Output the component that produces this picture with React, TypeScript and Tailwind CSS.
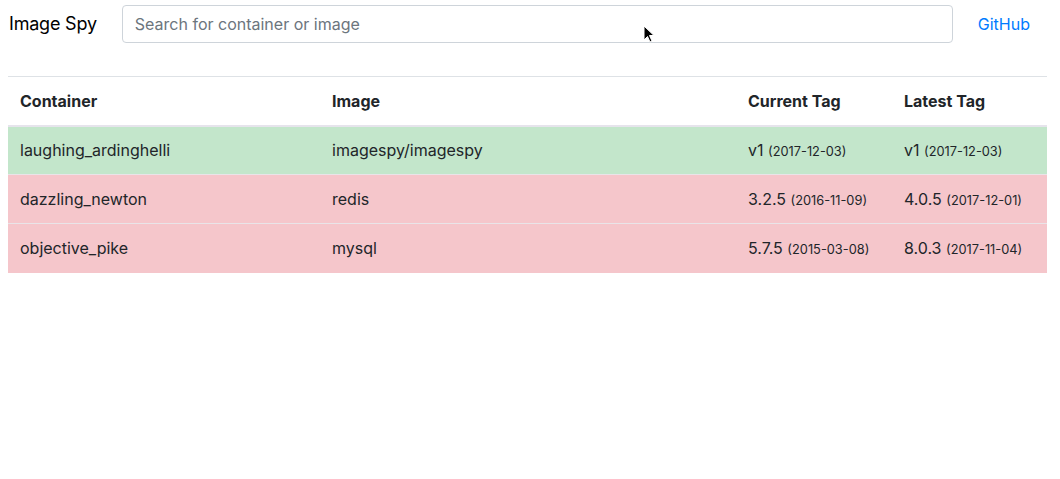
import React from 'react';

type Row = {
  container: string;
  image: string;
  current: [string, string];
  latest: [string, string];
  ok: boolean;
};

const ROWS: Row[] = [
  { container: 'laughing_ardinghelli', image: 'imagespy/imagespy', current: ['v1', '2017-12-03'], latest: ['v1', '2017-12-03'], ok: true },
  { container: 'dazzling_newton', image: 'redis', current: ['3.2.5', '2016-11-09'], latest: ['4.0.5', '2017-12-01'], ok: false },
  { container: 'objective_pike', image: 'mysql', current: ['5.7.5', '2015-03-08'], latest: ['8.0.3', '2017-11-04'], ok: false },
];

const Tag: React.FC<{ tag: [string, string] }> = ({ tag }) => (
  <>
    {tag[0]} <small className="text-[12.8px] leading-none">({tag[1]})</small>
  </>
);

export default function App() {
  return (
    <div className="relative min-h-[479px] bg-white text-[#212529] text-[16px] leading-6" style={{ fontFamily: 'Inter, "Noto Sans", sans-serif' }}>
      {/* navbar */}
      <nav className="flex items-center h-[48px] pl-[9px] pr-[30px]">
        <span className="text-[18px] tracking-[-0.2px] text-black mr-[25px] whitespace-nowrap">Image Spy</span>
        <input
          type="text"
          placeholder="Search for container or image"
          className="flex-1 h-[38px] px-3 border border-[#ced4da] rounded-[4px] text-[16px] placeholder:text-[#6c757d] outline-none"
        />
        <a className="ml-[25px] text-[#007bff] whitespace-nowrap">GitHub</a>
      </nav>

      <div className="pl-[8px] pr-[13px] pt-[28px]">
        <table className="w-full border-collapse text-left">
          <thead>
            <tr className="border-t border-[#dee2e6]">
              <th className="w-[312px] h-[49px] px-3 py-0 font-bold align-middle border-b-2 border-[#e6e4ec]">Container</th>
              <th className="w-[416px] h-[49px] px-3 py-0 font-bold align-middle border-b-2 border-[#e6e4ec]">Image</th>
              <th className="w-[156px] h-[49px] px-3 py-0 font-bold align-middle border-b-2 border-[#e6e4ec]">Current Tag</th>
              <th className="h-[49px] px-3 py-0 font-bold align-middle border-b-2 border-[#e6e4ec]">Latest Tag</th>
            </tr>
          </thead>
          <tbody>
            {ROWS.map((r) => (
              <tr key={r.container} className={r.ok ? 'bg-[#c3e6cb]' : 'bg-[#f5c6cb]'}>
                <td className="h-[49px] px-3 py-0 align-middle border-t border-[#e9e4e8]">{r.container}</td>
                <td className="h-[49px] px-3 py-0 align-middle border-t border-[#e9e4e8]">{r.image}</td>
                <td className="h-[49px] px-3 py-0 align-middle border-t border-[#e9e4e8]"><Tag tag={r.current} /></td>
                <td className="h-[49px] px-3 py-0 align-middle border-t border-[#e9e4e8]"><Tag tag={r.latest} /></td>
              </tr>
            ))}
          </tbody>
        </table>
      </div>

      {/* mouse cursor in screenshot */}
      <svg className="absolute left-[643px] top-[25px]" width="12" height="19" viewBox="0 0 12 19">
        <path d="M1 1 L1 15 L4.5 11.5 L7 17 L9 16 L6.5 10.5 L11 10.5 Z" fill="#000" stroke="#fff" strokeWidth="1" />
      </svg>
    </div>
  );
}
